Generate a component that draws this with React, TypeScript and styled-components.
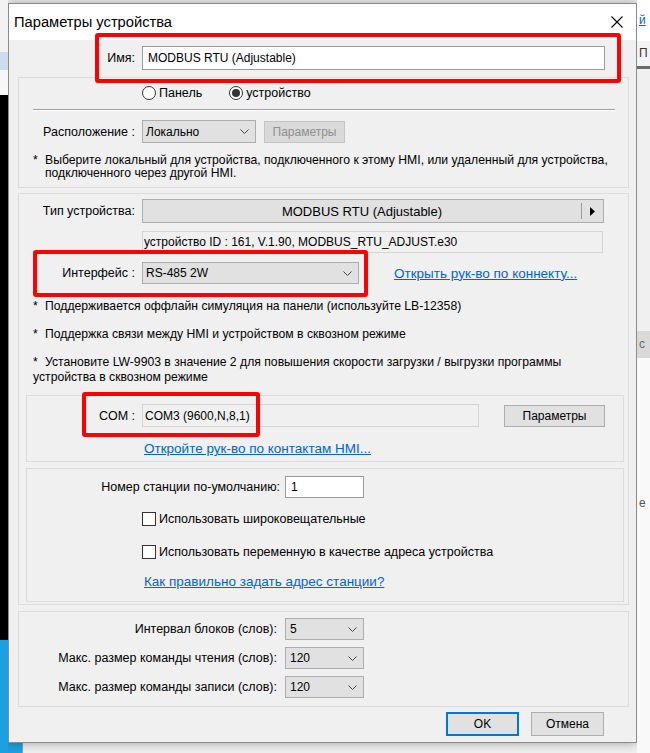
import React from "react";
import styled, { createGlobalStyle } from "styled-components";

const GlobalStyle = createGlobalStyle`
  html, body {
    margin: 0;
    padding: 0;
    background: #f0f0f0;
  }
  body {
    font-family: "Liberation Sans", Arial, sans-serif;
    font-size: 12.5px;
    color: #000;
  }
`;

const Desktop = styled.div`
  display: flex;
  width: 650px;
  height: 753px;
  overflow: hidden;
`;

const Strip = styled.div<{ $width: number }>`
  flex: none;
  width: ${(p) => p.$width}px;
  display: flex;
  flex-direction: column;
  overflow: hidden;
`;

const Patch = styled.div<{ $h?: number; $bg: string; $color?: string; $underline?: boolean }>`
  flex: ${(p) => (p.$h ? `0 0 ${p.$h}px` : "1 1 auto")};
  background: ${(p) => p.$bg};
  color: ${(p) => p.$color || "#000"};
  text-decoration: ${(p) => (p.$underline ? "underline" : "none")};
  overflow: hidden;
  white-space: nowrap;
  font-size: 12px;
  padding-left: 2px;
  line-height: ${(p) => (p.$h ? `${p.$h}px` : "normal")};
`;

const Dialog = styled.div`
  position: relative;
  z-index: 1;
  flex: none;
  width: 629px;
  height: 740px;
  box-sizing: border-box;
  border: 1px solid #8a8a8a;
  background: #f0f0f0;
  box-shadow: 0 0 10px rgba(0, 0, 0, 0.35);
  display: flex;
  flex-direction: column;
`;

const TitleBar = styled.div`
  flex: none;
  height: 36px;
  display: flex;
  align-items: center;
  justify-content: space-between;
  padding: 0 13px 0 5px;
  background: #fff;
  font-size: 14.7px;
`;

const Body = styled.div`
  flex: 1;
  display: flex;
  flex-direction: column;
  padding: 0 7px 0 9px;
`;

const Row = styled.div<{ $mt?: number; $h?: number; $pl?: number }>`
  display: flex;
  align-items: center;
  margin-top: ${(p) => p.$mt ?? 0}px;
  height: ${(p) => p.$h ?? 22}px;
  padding-left: ${(p) => p.$pl ?? 0}px;
  white-space: nowrap;
`;

const FieldLabel = styled.span<{ $w: number; $gap?: number }>`
  flex: none;
  width: ${(p) => p.$w}px;
  margin-right: ${(p) => p.$gap ?? 7}px;
  text-align: right;
  white-space: nowrap;
`;

const TextBox = styled.div<{ $w: number; $h?: number; $pad?: number; $readonly?: boolean }>`
  flex: none;
  box-sizing: border-box;
  width: ${(p) => p.$w}px;
  height: ${(p) => p.$h ?? 23}px;
  display: flex;
  align-items: center;
  padding-left: ${(p) => p.$pad ?? 5}px;
  font-size: 12px;
  background: ${(p) => (p.$readonly ? "#f0f0f0" : "#fff")};
  border: 1px solid ${(p) => (p.$readonly ? "#d4d4d4" : "#9a9a9a")};
  white-space: nowrap;
`;

const Combo = styled.div<{ $w: number; $h?: number; $pad?: number }>`
  flex: none;
  box-sizing: border-box;
  width: ${(p) => p.$w}px;
  height: ${(p) => p.$h ?? 22}px;
  display: flex;
  align-items: center;
  justify-content: space-between;
  padding: 0 6px 0 ${(p) => p.$pad ?? 3}px;
  font-size: 12px;
  background: #e1e1e1;
  border: 1px solid #adadad;
`;

const PushButton = styled.button<{ $w: number; $h?: number; $primary?: boolean; $ml?: number }>`
  flex: none;
  box-sizing: border-box;
  width: ${(p) => p.$w}px;
  height: ${(p) => p.$h ?? 22}px;
  margin-left: ${(p) => p.$ml ?? 0}px;
  padding: 0;
  font-family: inherit;
  font-size: 12px;
  color: #000;
  background: #e1e1e1;
  border: 1px solid ${(p) => (p.$primary ? "#0078d7" : "#adadad")};
  box-shadow: ${(p) => (p.$primary ? "inset 0 0 0 1px #0078d7" : "none")};

  &:disabled {
    color: #8f8f8f;
    background: #d9d9d9;
    border-color: #c4c4c4;
  }
`;

const TypeButton = styled.div`
  flex: none;
  box-sizing: border-box;
  width: 462px;
  height: 24px;
  display: flex;
  align-items: center;
  background: #e1e1e1;
  border: 1px solid #adadad;
  font-size: 13px;
`;

const TypeCaption = styled.span`
  flex: 1;
  text-align: center;
`;

const TypeArrow = styled.span`
  flex: none;
  width: 21px;
  height: 16px;
  display: flex;
  align-items: center;
  justify-content: center;
  border-left: 1px solid #9a9a9a;
`;

const GroupBox = styled.div<{ $h: number; $mt: number; $ml?: number; $mr?: number }>`
  flex: none;
  box-sizing: border-box;
  height: ${(p) => p.$h}px;
  margin: ${(p) => p.$mt}px ${(p) => p.$mr ?? 0}px 0 ${(p) => p.$ml ?? 0}px;
  border: 1px solid #dcdcdc;
  display: flex;
  flex-direction: column;
`;

const Separator = styled.div`
  margin: 8px 13px 0 14px;
  height: 0;
  border-top: 1px solid #a0a0a0;
  border-bottom: 1px solid #fff;
`;

const RadioDot = styled.span<{ $on?: boolean }>`
  box-sizing: border-box;
  width: 14px;
  height: 14px;
  border-radius: 50%;
  border: 1px solid #333;
  background: #fff;
  display: inline-flex;
  align-items: center;
  justify-content: center;

  &::after {
    content: "";
    width: 8px;
    height: 8px;
    border-radius: 50%;
    background: ${(p) => (p.$on ? "#333" : "transparent")};
  }
`;

const CheckBox = styled.span`
  flex: none;
  box-sizing: border-box;
  width: 14px;
  height: 14px;
  border: 1px solid #333;
  background: #fff;
`;

const OptionText = styled.span<{ $mr?: number }>`
  margin-left: 3px;
  margin-right: ${(p) => p.$mr ?? 0}px;
`;

const Note = styled.div<{ $mt: number; $lh?: number; $hang?: boolean }>`
  margin-top: ${(p) => p.$mt}px;
  padding-left: ${(p) => (p.$hang ? 26 : 14)}px;
  text-indent: ${(p) => (p.$hang ? -12 : 0)}px;
  font-size: 12.2px;
  line-height: ${(p) => p.$lh ?? 15}px;
  white-space: nowrap;
`;

const Star = styled.span`
  display: inline-block;
  width: 12px;
  text-indent: 0;
`;

const LinkText = styled.a<{ $ml?: number }>`
  margin-left: ${(p) => p.$ml ?? 0}px;
  font-size: 13.5px;
  color: #0066cc;
  text-decoration: underline;
  cursor: pointer;
`;

const LinkRow = styled.div<{ $mt: number; $pl: number }>`
  margin-top: ${(p) => p.$mt}px;
  padding-left: ${(p) => p.$pl}px;
  line-height: 15px;
`;

const ButtonBar = styled.div`
  display: flex;
  justify-content: flex-end;
  gap: 12px;
  margin: 5px 25px 0 0;
`;

const Highlight = styled.div<{ $x: number; $y: number; $w: number; $h: number }>`
  position: absolute;
  left: ${(p) => p.$x}px;
  top: ${(p) => p.$y}px;
  width: ${(p) => p.$w}px;
  height: ${(p) => p.$h}px;
  box-sizing: border-box;
  border: 4px solid #ff0000;
  border-radius: 3px;
  pointer-events: none;
`;

const Chevron = () => (
  <svg width="9" height="5" viewBox="0 0 9 5">
    <polyline points="0.5,0.5 4.5,4.5 8.5,0.5" fill="none" stroke="#444" strokeWidth="1" />
  </svg>
);

const CloseIcon = () => (
  <svg width="12" height="12" viewBox="0 0 12 12">
    <path d="M0.5 0.5 L11.5 11.5 M11.5 0.5 L0.5 11.5" stroke="#000" strokeWidth="1.1" />
  </svg>
);

const PlayIcon = () => (
  <svg width="5" height="9" viewBox="0 0 5 9">
    <polygon points="0,0 5,4.5 0,9" fill="#000" />
  </svg>
);

const App = () => {
  return (
    <>
      <GlobalStyle />
      <Desktop>
        <Strip $width={8}>
          <Patch $h={52} $bg="#f2f2f2" />
          <Patch $h={18} $bg="#cddcee" />
          <Patch $h={25} $bg="#f7f7f7" />
          <Patch $h={545} $bg="#000" />
          <Patch $bg="#1ba1e2" />
        </Strip>

        <Strip $width={629}>
          <Patch $h={3} $bg="#f0f0f0" />
          <Dialog>
            <TitleBar>
              <span>Параметры устройства</span>
              <CloseIcon />
            </TitleBar>
            <Body>
              <Row $mt={6} $h={24}>
                <FieldLabel $w={117}>Имя:</FieldLabel>
                <TextBox $w={463} $h={24}>MODBUS RTU (Adjustable)</TextBox>
              </Row>

              <GroupBox $mt={7} $h={111}>
                <Row $mt={7} $h={16} $pl={123}>
                  <RadioDot />
                  <OptionText $mr={27}>Панель</OptionText>
                  <RadioDot $on />
                  <OptionText>устройство</OptionText>
                </Row>
                <Separator />
                <Row $mt={9} $h={23}>
                  <FieldLabel $w={116}>Расположение :</FieldLabel>
                  <Combo $w={114} $h={23}>
                    <span>Локально</span>
                    <Chevron />
                  </Combo>
                  <PushButton $w={81} $ml={8} disabled>
                    Параметры
                  </PushButton>
                </Row>
                <Note $mt={11} $lh={13} $hang>
                  <Star>*</Star>Выберите локальный для устройства, подключенного к этому HMI, или удаленный для устройства,
                  <br />
                  подключенного через другой HMI.
                </Note>
              </GroupBox>

              <GroupBox $mt={5} $h={412}>
                <Row $mt={5} $h={24}>
                  <FieldLabel $w={116}>Тип устройства:</FieldLabel>
                  <TypeButton>
                    <TypeCaption>MODBUS RTU (Adjustable)</TypeCaption>
                    <TypeArrow>
                      <PlayIcon />
                    </TypeArrow>
                  </TypeButton>
                </Row>
                <Row $mt={8} $h={22} $pl={123}>
                  <TextBox $w={461} $h={22} $pad={1} $readonly>
                    устройство ID : 161, V.1.90, MODBUS_RTU_ADJUST.e30
                  </TextBox>
                </Row>
                <Row $mt={9} $h={22}>
                  <FieldLabel $w={116}>Интерфейс :</FieldLabel>
                  <Combo $w={217}>
                    <span>RS-485 2W</span>
                    <Chevron />
                  </Combo>
                  <LinkText $ml={35}>Открыть рук-во по коннекту...</LinkText>
                </Row>
                <Note $mt={15}>
                  <Star>*</Star>Поддерживается оффлайн симуляция на панели (используйте LB-12358)
                </Note>
                <Note $mt={13}>
                  <Star>*</Star>Поддержка связи между HMI и устройством в сквозном режиме
                </Note>
                <Note $mt={13}>
                  <Star>*</Star>Установите LW-9903 в значение 2 для повышения скорости загрузки / выгрузки программы
                  <br />
                  устройства в сквозном режиме
                </Note>

                <GroupBox $mt={10} $h={67} $ml={7} $mr={4}>
                  <Row $mt={8} $h={23}>
                    <FieldLabel $w={108}>COM :</FieldLabel>
                    <TextBox $w={337} $h={23} $pad={2} $readonly>
                      COM3 (9600,N,8,1)
                    </TextBox>
                    <PushButton $w={101} $h={22} $ml={25}>
                      Параметры
                    </PushButton>
                  </Row>
                  <LinkRow $mt={14} $pl={117}>
                    <LinkText>Откройте рук-во по контактам HMI...</LinkText>
                  </LinkRow>
                </GroupBox>

                <GroupBox $mt={6} $h={134} $ml={7} $mr={4}>
                  <Row $mt={7} $h={22}>
                    <FieldLabel $w={253} $gap={5}>
                      Номер станции по-умолчанию:
                    </FieldLabel>
                    <TextBox $w={79} $h={22} $pad={5}>
                      1
                    </TextBox>
                  </Row>
                  <Row $mt={13} $h={16} $pl={115}>
                    <CheckBox />
                    <OptionText>Использовать широковещательные</OptionText>
                  </Row>
                  <Row $mt={17} $h={16} $pl={115}>
                    <CheckBox />
                    <OptionText>Использовать переменную в качестве адреса устройства</OptionText>
                  </Row>
                  <LinkRow $mt={14} $pl={117}>
                    <LinkText>Как правильно задать адрес станции?</LinkText>
                  </LinkRow>
                </GroupBox>
              </GroupBox>

              <GroupBox $mt={6} $h={96}>
                <Row $mt={6} $h={22}>
                  <FieldLabel $w={258} $gap={8}>
                    Интервал блоков (слов):
                  </FieldLabel>
                  <Combo $w={79} $pad={4}>
                    <span>5</span>
                    <Chevron />
                  </Combo>
                </Row>
                <Row $mt={7} $h={22}>
                  <FieldLabel $w={258} $gap={8}>
                    Макс. размер команды чтения (слов):
                  </FieldLabel>
                  <Combo $w={79} $pad={4}>
                    <span>120</span>
                    <Chevron />
                  </Combo>
                </Row>
                <Row $mt={7} $h={22}>
                  <FieldLabel $w={258} $gap={8}>
                    Макс. размер команды записи (слов):
                  </FieldLabel>
                  <Combo $w={79} $pad={4}>
                    <span>120</span>
                    <Chevron />
                  </Combo>
                </Row>
              </GroupBox>

              <ButtonBar>
                <PushButton $w={73} $h={24} $primary>
                  OK
                </PushButton>
                <PushButton $w={73} $h={24}>
                  Отмена
                </PushButton>
              </ButtonBar>
            </Body>

            <Highlight $x={86} $y={29} $w={526} $h={50} />
            <Highlight $x={24} $y={246} $w={335} $h={47} />
            <Highlight $x={73} $y={388} $w={178} $h={45} />
          </Dialog>
          <Patch $bg="linear-gradient(to right, #1ba1e2 0 14px, #9a9a9a 14px 15px, #f0f0f0 15px)" />
        </Strip>

        <Strip $width={13}>
          <Patch $h={41} $bg="#fff" $color="#0066cc" $underline>
            й
          </Patch>
          <Patch $h={25} $bg="#f3f3f3" $color="#333">
            П
          </Patch>
          <Patch $h={3} $bg="#6a6a6a" />
          <Patch $h={262} $bg="#f0f0f0" />
          <Patch $h={27} $bg="#d9d9d9" $color="#666">
            с
          </Patch>
          <Patch $h={130} $bg="#f9f9f9" />
          <Patch $h={30} $bg="#f9f9f9" $color="#555">
            e
          </Patch>
          <Patch $bg="#f9f9f9" />
        </Strip>
      </Desktop>
    </>
  );
};

export default App;
